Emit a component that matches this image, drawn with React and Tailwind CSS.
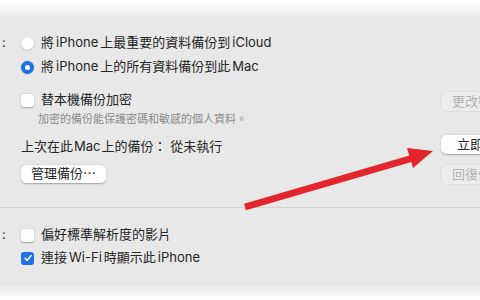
import React from 'react';

const FONT = { fontFamily: 'Inter, "Noto Sans CJK TC", "Noto Sans", sans-serif' };

function Radio({ checked }) {
  if (checked) {
    return (
      <span className="w-[13px] h-[13px] rounded-full bg-[#1f6fe5] flex items-center justify-center shadow-[0_0_0_0.5px_rgba(0,0,0,0.15)] shrink-0">
        <span className="w-[5px] h-[5px] rounded-full bg-white" />
      </span>
    );
  }
  return (
    <span className="w-[13px] h-[13px] rounded-full bg-white shadow-[0_0.5px_1.5px_rgba(0,0,0,0.3)] shrink-0" />
  );
}

function Checkbox({ checked }) {
  if (checked) {
    return (
      <span className="w-[13px] h-[13px] rounded-[3px] bg-[#1f6fe5] flex items-center justify-center shrink-0">
        <svg viewBox="0 0 12 12" className="w-[10px] h-[10px]">
          <path d="M2.5 6.3 L5 8.8 L9.6 3.2" fill="none" stroke="white" strokeWidth="1.9" strokeLinecap="round" strokeLinejoin="round" />
        </svg>
      </span>
    );
  }
  return (
    <span className="w-[13px] h-[13px] rounded-[3px] bg-white shadow-[0_0.5px_1.5px_rgba(0,0,0,0.3)] shrink-0" />
  );
}

function Row({ children, className = '' }) {
  return (
    <div className={`h-[22px] flex items-center gap-[7px] text-[13px] text-[#262626] ${className}`}>
      {children}
    </div>
  );
}

function SideButton({ children, enabled, className = '' }) {
  const look = enabled
    ? 'bg-white text-[#262626] shadow-[0_0.5px_1.5px_rgba(0,0,0,0.3)]'
    : 'bg-[#ececec] text-[#b3b3b3] shadow-[0_0_0_0.5px_rgba(0,0,0,0.08)]';
  return (
    <div className={`h-[19px] w-[90px] rounded-[5px] flex items-center text-[13px] whitespace-nowrap ${look} ${className}`}>
      {children}
    </div>
  );
}

export default function App() {
  return (
    <div className="w-[480px] h-[300px] bg-white overflow-hidden relative" style={FONT}>
      <div className="h-[16px] bg-gradient-to-b from-white to-[#eeeeee]" />

      <div className="h-[266px] bg-[#e8e8e8] relative">
        {/* backup section */}
        <section className="flex pt-[16px] pb-[23px]">
          <div className="w-[21px] shrink-0">
            <div className="h-[22px] flex items-center pl-[2px] text-[13px] text-[#262626]">:</div>
          </div>

          <div className="flex-1 flex flex-col">
            <Row>
              <Radio />
              <span>將<span className="ml-[2px] mr-[2px]">iPhone</span>上最重要的資料備份到<span className="ml-[2px]">iCloud</span></span>
            </Row>
            <Row className="mt-[2px]">
              <Radio checked />
              <span>將<span className="ml-[2px] mr-[2px]">iPhone</span>上的所有資料備份到此<span className="ml-[2px]">Mac</span></span>
            </Row>
            <Row className="mt-[11px]">
              <Checkbox />
              <span>替本機備份加密</span>
            </Row>
            <div className="h-[16px] ml-[17px] flex items-center text-[11px] text-[#8c8c8c]">
              加密的備份能保護密碼和敏感的個人資料。
            </div>
            <div className="h-[20px] mt-[10px] flex items-center text-[13px] text-[#262626]">
              上次在此<span className="ml-[1px] mr-[1px]">Mac</span>上的備份：&nbsp;從未執行
            </div>
            <div className="mt-[8px] h-[18px] w-[85px] rounded-[5px] bg-white shadow-[0_0.5px_1.5px_rgba(0,0,0,0.3)] flex items-center justify-center text-[13px] text-[#262626]">
              管理備份⋯
            </div>
          </div>

          <div className="w-[39px] shrink-0 flex flex-col">
            <SideButton className="mt-[60px] pl-[11px]">更改密碼⋯</SideButton>
            <SideButton enabled className="mt-[24px] pl-[16px]">立即備份</SideButton>
            <SideButton className="mt-[11px] pl-[11px]">回復備份⋯</SideButton>
          </div>
        </section>

        <div className="h-px bg-[#d2d2d2]" />

        {/* options section */}
        <section className="flex pt-[16px]">
          <div className="w-[21px] shrink-0">
            <div className="h-[22px] flex items-center pl-[2px] text-[13px] text-[#262626]">:</div>
          </div>
          <div className="flex-1 flex flex-col">
            <Row>
              <Checkbox />
              <span>偏好標準解析度的影片</span>
            </Row>
            <Row className="mt-[1px]">
              <Checkbox checked />
              <span>連接<span className="ml-[2px] mr-[2px]">Wi-Fi</span>時顯示此<span className="ml-[2px]">iPhone</span></span>
            </Row>
          </div>
        </section>
      </div>

      <div className="h-[18px] bg-gradient-to-b from-[#e2e2e2] to-white" />

      {/* red annotation arrow */}
      <svg className="absolute left-0 top-0 pointer-events-none" width="480" height="300" viewBox="0 0 480 300">
        <line x1="245" y1="207" x2="413" y2="158" stroke="#e2262b" strokeWidth="7" />
        <polygon points="433,151 407,148 413,168" fill="#e2262b" />
      </svg>
    </div>
  );
}
